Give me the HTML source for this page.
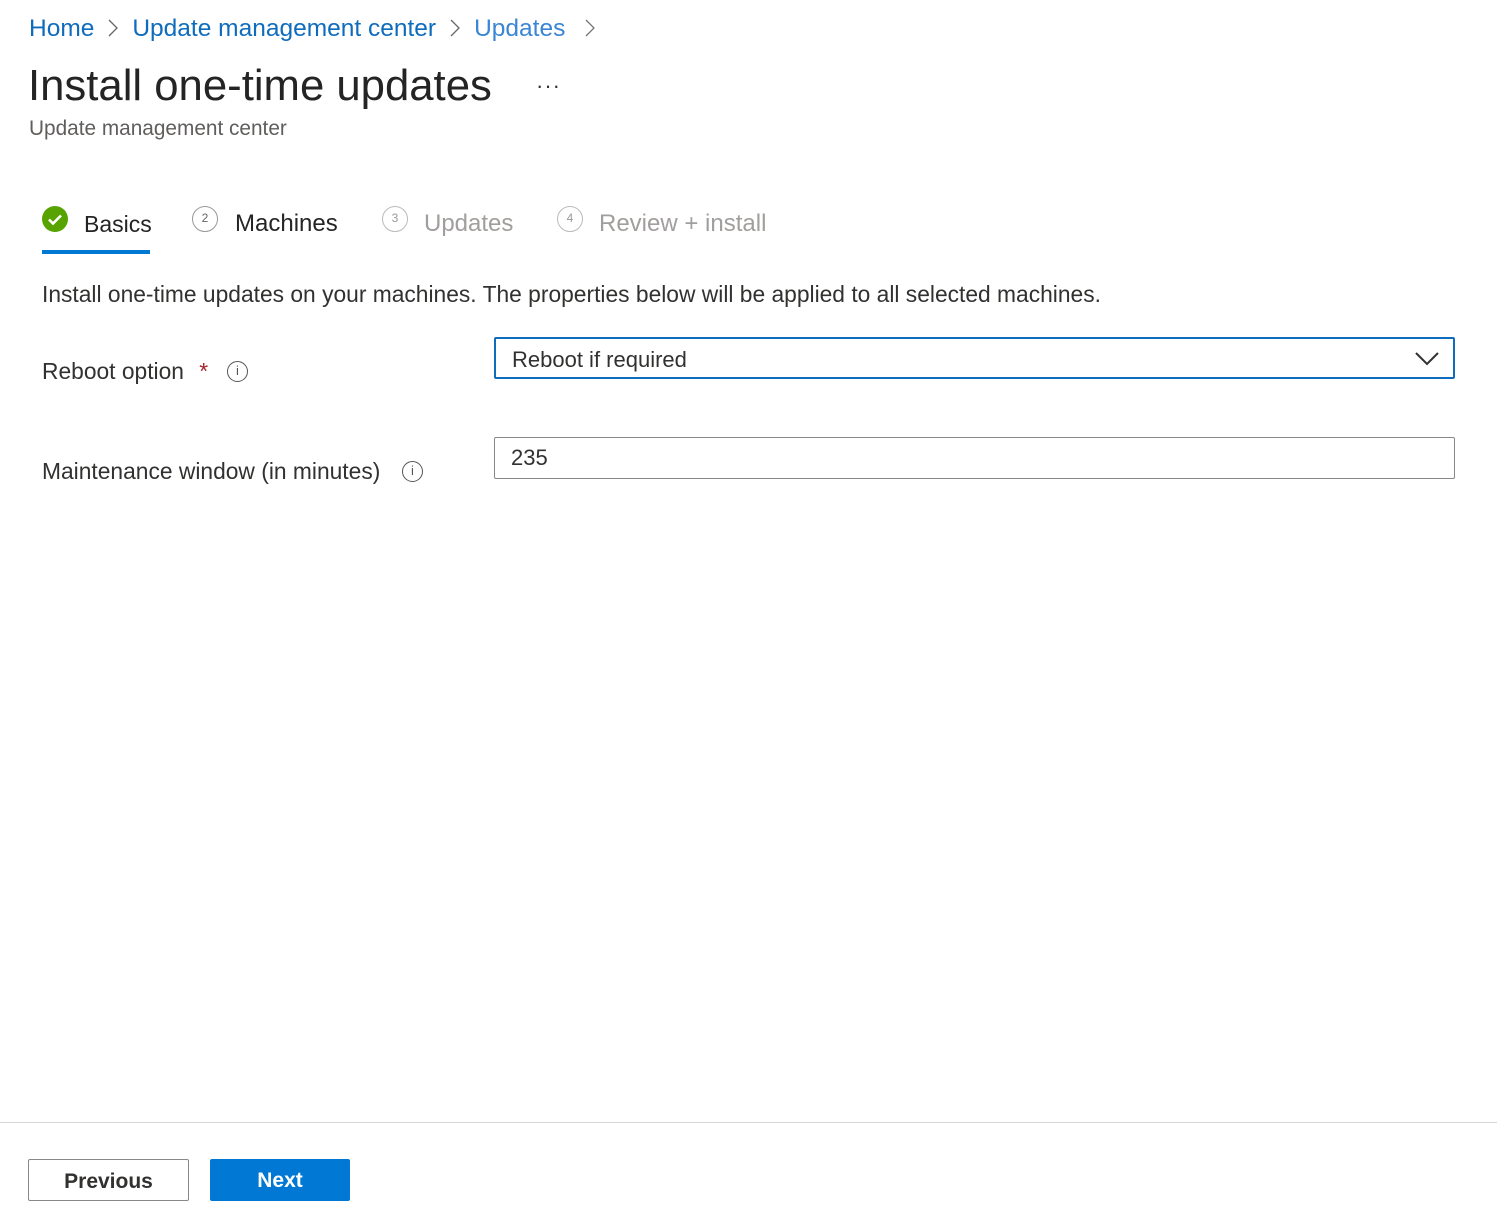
<!DOCTYPE html>
<html><head><meta charset="utf-8"><style>
*{margin:0;padding:0;box-sizing:border-box}
body{width:1497px;height:1220px;background:#fff;font-family:"Liberation Sans",sans-serif;color:#323130;position:relative;overflow:hidden}
.a{position:absolute;white-space:nowrap}
.bc{top:15px;left:29px;font-size:24.5px;color:#0f6cbd}
.bc svg{margin:0 14px 0 14px;vertical-align:-1px}
.title{top:61px;left:28px;font-size:43.7px;color:#242424}
.dots{top:73px;left:536px;font-size:22px;letter-spacing:1px;color:#333}
.sub{top:117px;left:29px;font-size:20.8px;color:#605e5c}
.tab{top:210px;font-size:24px}
.circ{position:absolute;width:26px;height:26px;border:1.5px solid #999;border-radius:50%;font-size:12px;text-align:center;line-height:23px;color:#666}
.lbl{font-size:22.8px;color:#323130}
.info{position:absolute;width:21px;height:21px;border:1.5px solid #555;border-radius:50%;font-size:13px;text-align:center;line-height:18px;color:#555}
.box{position:absolute;left:494px;width:961px;height:42px;font-size:22px;padding-left:16px;line-height:42px}
.btn{position:absolute;top:1159px;height:42px;font-size:21px;font-weight:bold;text-align:center;line-height:43px}
</style></head><body>
<div class="a bc">Home<svg width="10" height="18" viewBox="0 0 10 18"><path d="M1 1l8 8-8 8" stroke="#666" stroke-width="1.3" fill="none"/></svg>Update management center<svg width="10" height="18" viewBox="0 0 10 18"><path d="M1 1l8 8-8 8" stroke="#666" stroke-width="1.3" fill="none"/></svg><span style="color:#3a86d4">Updates</span><svg width="10" height="18" viewBox="0 0 10 18" style="margin-left:20px"><path d="M1 1l8 8-8 8" stroke="#777" stroke-width="1.3" fill="none"/></svg></div>
<div class="a title">Install one-time updates</div>
<div class="a dots">···</div>
<div class="a sub">Update management center</div>

<svg class="a" style="top:206px;left:42px" width="26" height="26" viewBox="0 0 26 26"><circle cx="13" cy="13" r="13" fill="#57a300"/><path d="M7 13.5l4 4 8-8" stroke="#fff" stroke-width="2.6" fill="none"/></svg>
<div class="a tab" style="left:84px;color:#242424;font-size:23px;top:211px">Basics</div>
<div class="a" style="top:250px;left:42px;width:108px;height:4px;background:#0078d4"></div>
<div class="circ" style="top:206px;left:192px">2</div>
<div class="a tab" style="left:235px;color:#242424">Machines</div>
<div class="circ" style="top:206px;left:382px;border-color:#bbb;color:#999">3</div>
<div class="a tab" style="left:424px;color:#a19f9d">Updates</div>
<div class="circ" style="top:206px;left:557px;border-color:#bbb;color:#999">4</div>
<div class="a tab" style="left:599px;color:#a19f9d">Review + install</div>

<div class="a lbl" style="top:281px;left:42px">Install one-time updates on your machines. The properties below will be applied to all selected machines.</div>

<div class="a lbl" style="top:358px;left:42px">Reboot option <span style="color:#a4262c;margin-left:9px">*</span></div>
<div class="info" style="top:361px;left:227px">i</div>
<div class="box" style="top:337px;border:2px solid #0f6cbd;border-radius:2px;line-height:42px">Reboot if required
<svg style="position:absolute;right:14px;top:13px" width="24" height="14" viewBox="0 0 24 14"><path d="M1 1l11 11L23 1" stroke="#323130" stroke-width="2" fill="none"/></svg></div>

<div class="a lbl" style="top:458px;left:42px">Maintenance window (in minutes)</div>
<div class="info" style="top:461px;left:402px">i</div>
<div class="box" style="top:437px;border:1px solid #8a8886;border-radius:2px;line-height:40px">235</div>

<div class="a" style="top:1122px;left:0;width:1497px;height:1px;background:#d6d6d6"></div>
<div class="btn" style="left:28px;width:161px;border:1px solid #8a8886;border-radius:2px;color:#323130">Previous</div>
<div class="btn" style="left:210px;width:140px;background:#0078d4;border-radius:2px;color:#fff">Next</div>
</body></html>
